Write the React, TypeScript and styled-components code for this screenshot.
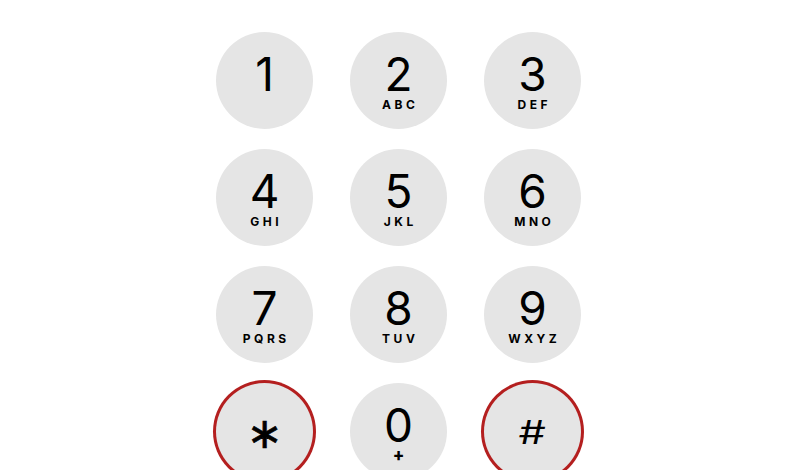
import React from "react";
import styled, { createGlobalStyle, css } from "styled-components";

const GlobalStyle = createGlobalStyle`
  html, body {
    margin: 0;
    padding: 0;
    background: #ffffff;
    overflow: hidden;
  }
  body {
    font-family: Inter, "Noto Sans", Arial, sans-serif;
    color: #000;
  }
`;

type Symbol = "star" | "hash";
type KeyDef = { digit: string; letters?: string; symbol?: Symbol };

const keys: KeyDef[] = [
  { digit: "1" },
  { digit: "2", letters: "ABC" },
  { digit: "3", letters: "DEF" },
  { digit: "4", letters: "GHI" },
  { digit: "5", letters: "JKL" },
  { digit: "6", letters: "MNO" },
  { digit: "7", letters: "PQRS" },
  { digit: "8", letters: "TUV" },
  { digit: "9", letters: "WXYZ" },
  { digit: "\u2217", symbol: "star" },
  { digit: "0", letters: "+" },
  { digit: "#", symbol: "hash" },
];

const Keypad = () => {
  return (
    <Page>
      <GlobalStyle />
      <Grid>
        {keys.map((k) => (
          <Key key={k.digit} $marked={!!k.symbol}>
            <Digit $symbol={k.symbol}>{k.digit}</Digit>
            {k.letters && <Letters $plus={k.letters === "+"}>{k.letters}</Letters>}
          </Key>
        ))}
      </Grid>
    </Page>
  );
};

const Page = styled.div`
  width: 800px;
  height: 470px;
  display: flex;
  justify-content: center;
  padding-top: 32px;
  padding-right: 3px;
  box-sizing: border-box;
`;

const Grid = styled.div`
  display: grid;
  grid-template-columns: repeat(3, 97px);
  grid-auto-rows: 97px;
  column-gap: 37px;
  row-gap: 20px;
`;

const Key = styled.button<{ $marked?: boolean }>`
  width: 97px;
  height: 97px;
  border: none;
  border-radius: 50%;
  background: #e5e5e5;
  padding: 19px 0 0;
  margin: 0;
  display: flex;
  flex-direction: column;
  align-items: center;
  font-family: Inter, "Noto Sans", sans-serif;
  color: #000;
  ${(p) =>
    p.$marked &&
    css`
      box-shadow: 0 0 0 3px #b41f1f;
    `}
`;

const Digit = styled.span<{ $symbol?: Symbol }>`
  font-size: 46px;
  line-height: 46px;
  height: 46px;
  font-weight: 400;
  ${(p) =>
    p.$symbol === "star" &&
    css`
      font-family: "DejaVu Sans", sans-serif;
      font-size: 43px;
      line-height: 43px;
      height: 43px;
      margin-top: 10px;
      -webkit-text-stroke: 0.6px #000;
    `}
  ${(p) =>
    p.$symbol === "hash" &&
    css`
      font-size: 32px;
      line-height: 32px;
      height: 32px;
      margin-top: 15px;
      transform: scaleX(1.35);
    `}
`;

const Letters = styled.span<{ $plus?: boolean }>`
  margin-top: 2px;
  font-size: 12px;
  line-height: 12px;
  font-weight: 700;
  letter-spacing: 3.5px;
  padding-left: 3.5px;
  ${(p) =>
    p.$plus &&
    css`
      margin-top: 0;
      font-size: 17px;
      line-height: 14px;
      font-weight: 800;
      letter-spacing: 0;
      padding-left: 0;
    `}
`;

export default Keypad;
